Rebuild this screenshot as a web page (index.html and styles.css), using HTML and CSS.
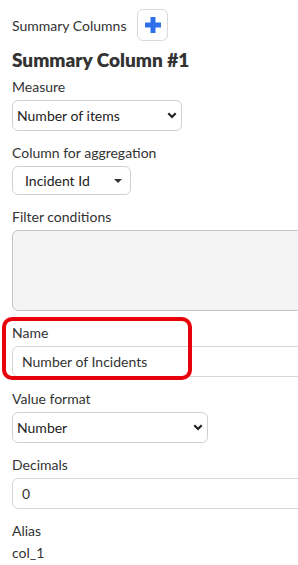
FILE: index.html
```html
<!DOCTYPE html>
<html lang="en">
<head>
    <meta charset="UTF-8">
    <meta name="viewport" content="width=device-width, initial-scale=1.0">
    <title>Summary Columns</title>
    <link rel="stylesheet" href="styles.css">
</head>
<body>
    <div class="panel">
        <div class="header">
            <span class="header-text">Summary Columns</span>
            <button class="add-btn" type="button">
                <svg width="16" height="16" viewBox="0 0 16 16">
                    <rect x="5.5" y="0" width="5" height="16" rx="0.5" fill="#2f6fec"/>
                    <rect x="0" y="5.5" width="16" height="5" rx="0.5" fill="#2f6fec"/>
                </svg>
            </button>
        </div>

        <h2 class="column-title">Summary Column #1</h2>

        <div class="field">
            <div class="label">Measure</div>
            <div class="select select-measure">
                <span>Number of items</span>
                <svg class="chevron" width="10" height="7" viewBox="0 0 10 7"><path d="M1.3 1.3 L5 5 L8.7 1.3" fill="none" stroke="#222" stroke-width="2.2"/></svg>
            </div>
        </div>

        <div class="field">
            <div class="label">Column for aggregation</div>
            <div class="dropdown">
                <span>Incident Id</span>
                <span class="caret"></span>
            </div>
        </div>

        <div class="field">
            <div class="label">Filter conditions</div>
            <div class="filter-box"></div>
        </div>

        <div class="field highlight">
            <div class="label">Name</div>
            <div class="text-input">Number of Incidents</div>
        </div>

        <div class="field">
            <div class="label">Value format</div>
            <div class="select select-format">
                <span>Number</span>
                <svg class="chevron" width="10" height="7" viewBox="0 0 10 7"><path d="M1.3 1.3 L5 5 L8.7 1.3" fill="none" stroke="#222" stroke-width="2.2"/></svg>
            </div>
        </div>

        <div class="field">
            <div class="label">Decimals</div>
            <div class="text-input">0</div>
        </div>

        <div class="field">
            <div class="label">Alias</div>
            <div class="value">col_1</div>
        </div>
    </div>
</body>
</html>
```

FILE: styles.css
```css
body {
    margin: 0;
    background: #fff;
    color: #333;
    font-family: Lato, "Open Sans", sans-serif;
    font-size: 14px;
    overflow: hidden;
}

.panel {
    padding: 9px 0 0 12px;
    overflow: hidden;
}

.header {
    display: flex;
    align-items: center;
    gap: 11px;
    height: 32px;
}

.header-text {
    font-size: 14px;
}

.add-btn {
    width: 31px;
    height: 32px;
    padding: 0;
    border: 1px solid #d9d9d9;
    border-radius: 6px;
    background: #fff;
    display: flex;
    align-items: center;
    justify-content: center;
}

.column-title {
    margin: 8px 0 -6px;
    font-size: 19px;
    line-height: 22px;
    font-weight: 800;
    color: #333;
}

.field {
    margin-top: 13px;
    position: relative;
}

.label {
    line-height: 18px;
    margin-bottom: 4px;
}

.select {
    box-sizing: border-box;
    height: 31px;
    border: 1px solid #d0d0d0;
    border-radius: 6px;
    display: flex;
    align-items: center;
    justify-content: space-between;
    padding: 0 4px 0 4px;
    color: #222;
}

.select-measure {
    width: 170px;
}

.select-format {
    width: 196px;
}

.dropdown {
    box-sizing: border-box;
    width: 119px;
    height: 29px;
    border: 1px solid #d0d0d0;
    border-radius: 6px;
    display: flex;
    align-items: center;
    justify-content: space-between;
    padding: 0 8px 0 12px;
    color: #222;
}

.caret {
    width: 0;
    height: 0;
    border-left: 4px solid transparent;
    border-right: 4px solid transparent;
    border-top: 4px solid #333;
}

.filter-box {
    box-sizing: border-box;
    width: 300px;
    height: 81px;
    background: #f4f4f4;
    border: 1px solid #c3c3cc;
    border-radius: 6px;
}

.text-input {
    box-sizing: border-box;
    width: 300px;
    height: 31px;
    border: 1px solid #d6d6d6;
    border-radius: 6px;
    padding: 0 9px;
    line-height: 29px;
    color: #333;
}

.value {
    line-height: 18px;
}

.highlight::after {
    content: "";
    position: absolute;
    top: -7px;
    left: -10px;
    width: 190px;
    height: 63px;
    box-sizing: border-box;
    border: 4px solid #e8000b;
    border-radius: 10px;
}
```
